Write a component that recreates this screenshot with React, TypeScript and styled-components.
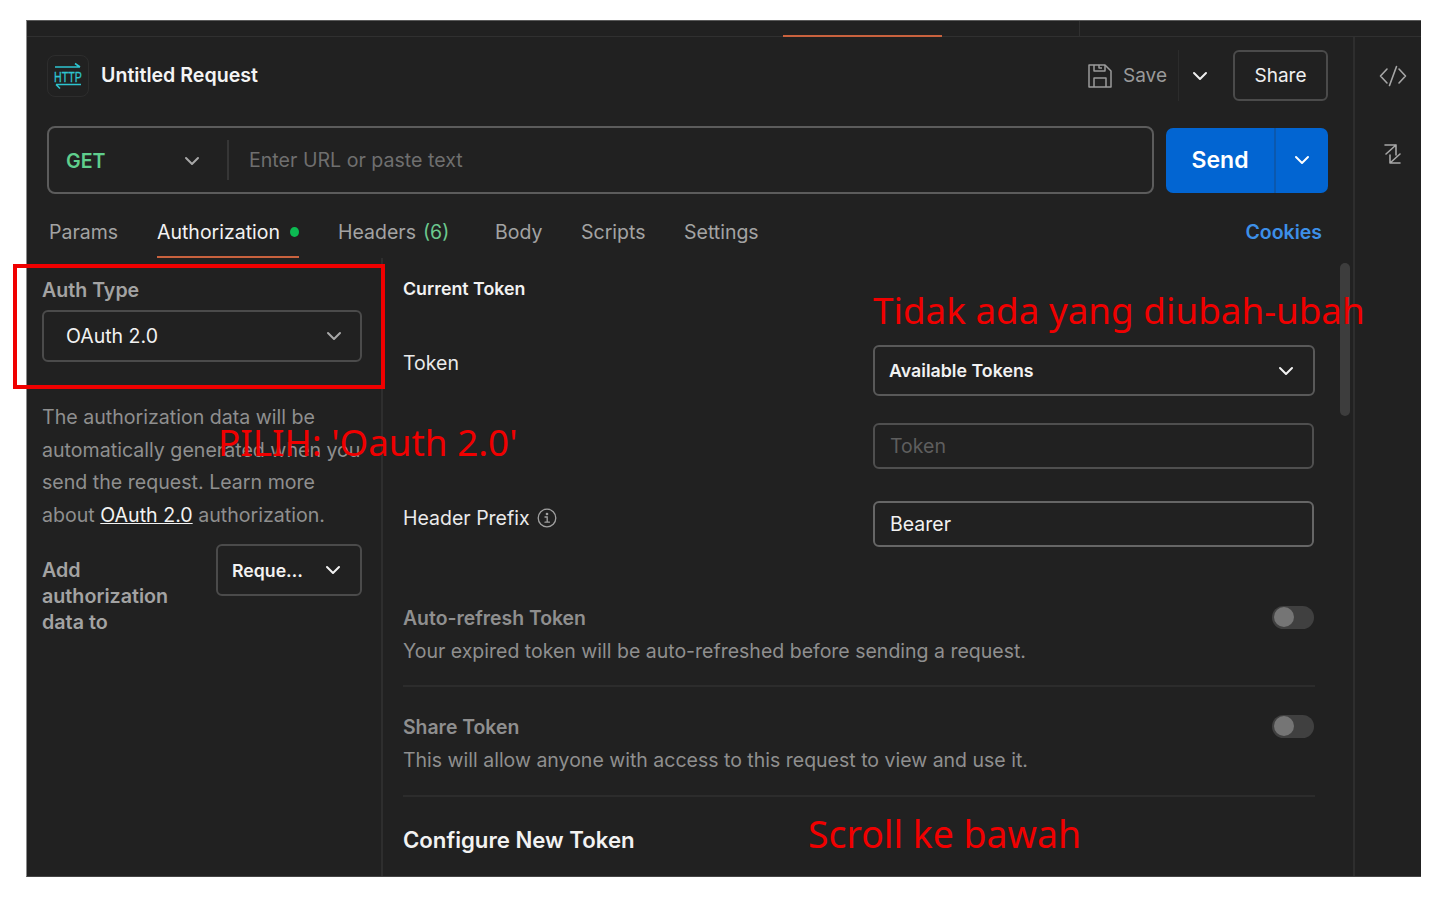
import React from "react";
import styled, { createGlobalStyle } from "styled-components";

const Global = createGlobalStyle`
  html, body { margin: 0; padding: 0; background: #fff; }
  body { font-family: Inter, "Liberation Sans", sans-serif; overflow: hidden; }
  * { box-sizing: border-box; }
`;

const Page = styled.div`
  position: relative;
  width: 1440px;
  height: 903px;
  padding: 20px 19px 26px 26px;
  background: #fff;
  overflow: hidden;
`;
const Win = styled.div`
  width: 1395px;
  height: 857px;
  background: #212121;
  border-top: 1px solid #5a5a5a;
  border-left: 1px solid #8a8a8a;
  border-bottom: 1px solid #444;
  display: flex;
  flex-direction: column;
  overflow: hidden;
  color: #f2f2f2;
`;
const TopStrip = styled.div`
  height: 16px;
  flex: none;
  border-bottom: 1px solid #303030;
  display: flex;
`;
const StripSpacer = styled.div`
  width: 756px;
`;
const StripActive = styled.div`
  width: 159px;
  height: 16px;
  border-bottom: 2px solid #c9623e;
`;
const StripTick = styled.div`
  width: 1px;
  height: 15px;
  margin-left: 137px;
  background: #303030;
`;
const Main = styled.div`
  flex: 1;
  display: flex;
  min-height: 0;
`;
const Work = styled.div`
  position: relative;
  width: 1326px;
  flex: none;
  display: flex;
  flex-direction: column;
  min-height: 0;
`;
const Rail = styled.div`
  flex: 1;
  border-left: 2px solid #2e2e2e;
  display: flex;
  flex-direction: column;
  align-items: center;
  padding: 28px 0 0 10px;
  gap: 56px;
  color: #a6a6a6;
`;
const Header = styled.div`
  height: 89px;
  flex: none;
  padding: 13px 0 0 20px;
  display: flex;
  align-items: flex-start;
`;
const LogoBox = styled.div`
  width: 42px;
  height: 42px;
  margin-top: 5px;
  border: 1px solid #2d2d2d;
  border-radius: 8px;
  display: flex;
  align-items: center;
  justify-content: center;
`;
const Title = styled.div`
  margin: 4px 0 0 12px;
  height: 42px;
  line-height: 42px;
  font-size: 19.6px;
  font-weight: 600;
  color: #f4f4f4;
  flex: 1;
`;
const SaveGroup = styled.div`
  display: flex;
  align-items: center;
  height: 51px;
  color: #9a9a9a;
  font-size: 19px;
  gap: 11px;
`;
const SaveSep = styled.div`
  width: 1px;
  height: 51px;
  background: #2c2c2c;
`;
const SaveChevron = styled.div`
  width: 42px;
  display: flex;
  justify-content: center;
  margin-left: -11px;
  color: #eee;
`;
const ShareButton = styled.div`
  width: 95px;
  height: 51px;
  margin: 0 25px 0 12px;
  border: 2px solid #4b4b4b;
  border-radius: 6px;
  display: flex;
  align-items: center;
  justify-content: center;
  font-size: 19px;
  color: #f0f0f0;
`;
const UrlRow = styled.div`
  height: 68px;
  flex: none;
  margin-left: 20px;
  display: flex;
  gap: 12px;
  align-items: center;
`;
const UrlBox = styled.div`
  width: 1107px;
  height: 68px;
  border: 2px solid #5c5c5c;
  border-radius: 8px;
  display: flex;
  align-items: center;
`;
const Method = styled.div`
  width: 180px;
  height: 40px;
  padding: 1px 27px 0 17px;
  border-right: 2px solid #363636;
  display: flex;
  align-items: center;
  justify-content: space-between;
  color: #5fce8d;
  font-size: 19.6px;
  font-weight: 600;
`;
const MethodChevron = styled.span`
  color: #a8a8a8;
  display: flex;
`;
const UrlPlaceholder = styled.div`
  padding-left: 20px;
  font-size: 19.6px;
  color: #6f6f6f;
`;
const SendGroup = styled.div`
  width: 162px;
  height: 65px;
  display: flex;
  border-radius: 7px;
  background: #0265d2;
  overflow: hidden;
  color: #fff;
`;
const SendLabel = styled.div`
  width: 110px;
  display: flex;
  align-items: center;
  justify-content: center;
  font-size: 23px;
  font-weight: 600;
  border-right: 2px solid #0b58ae;
`;
const SendChevron = styled.div`
  flex: 1;
  display: flex;
  align-items: center;
  justify-content: center;
`;
const Tabs = styled.div`
  height: 64px;
  flex: none;
  padding: 0 31px 0 22px;
  display: flex;
  font-size: 19.5px;
  color: #a3a3a3;
`;
const Tab = styled.div<{ $w: number; $active?: boolean }>`
  width: ${(p) => p.$w}px;
  height: 64px;
  padding-top: ${(p) => (p.$active ? 0 : 12)}px;
  display: flex;
  align-items: center;
  gap: 10px;
  white-space: nowrap;
  color: ${(p) => (p.$active ? "#f2f2f2" : "inherit")};
`;
const ActiveTabInner = styled.div`
  width: 142px;
  height: 64px;
  padding-top: 14px;
  display: flex;
  align-items: center;
  gap: 10px;
  border-bottom: 2px solid #c9623e;
`;
const Dot = styled.span`
  width: 10px;
  height: 10px;
  border-radius: 50%;
  background: #0cbb52;
`;
const Count = styled.span`
  color: #6cc88e;
  margin-left: -3px;
`;
const CookieLink = styled.div`
  margin-left: auto;
  height: 64px;
  padding-top: 12px;
  display: flex;
  align-items: center;
  color: #3d8fe8;
  font-size: 19.5px;
  font-weight: 600;
`;
const Body = styled.div`
  flex: 1;
  min-height: 0;
  display: flex;
  overflow: hidden;
`;
const LeftPane = styled.div`
  width: 356px;
  flex: none;
  border-right: 2px solid #2e2e2e;
  padding: 20px 19px 0 15px;
`;
const AuthLabel = styled.div`
  font-size: 19.6px;
  font-weight: 600;
  line-height: 24px;
  color: #a3a3a3;
`;
const AuthSelect = styled.div`
  height: 52px;
  margin-top: 8px;
  padding: 0 18px 0 22px;
  border: 2px solid #4b4b4b;
  border-radius: 6px;
  display: flex;
  align-items: center;
  justify-content: space-between;
  font-size: 19.5px;
  color: #f2f2f2;
`;
const Desc = styled.div`
  margin-top: 39px;
  font-size: 19.6px;
  line-height: 32.6px;
  color: #8f8f8f;
  white-space: nowrap;
`;
const DescLink = styled.span`
  color: #f2f2f2;
  text-decoration: underline;
`;
const AddRow = styled.div`
  margin-top: 13px;
  display: flex;
  justify-content: space-between;
  align-items: flex-start;
`;
const AddLabel = styled.div`
  margin-top: 13px;
  font-size: 19.7px;
  font-weight: 600;
  line-height: 26px;
  color: #a3a3a3;
`;
const AddSelect = styled.div`
  width: 146px;
  height: 52px;
  padding: 0 19px 0 14px;
  border: 2px solid #4b4b4b;
  border-radius: 6px;
  display: flex;
  align-items: center;
  justify-content: space-between;
  font-size: 17.7px;
  font-weight: 600;
  color: #f2f2f2;
`;
const RightPane = styled.div`
  flex: 1;
  min-width: 0;
  padding: 21px 38px 0 20px;
`;
const SubHead = styled.div`
  height: 20px;
  line-height: 20px;
  font-size: 17.8px;
  font-weight: 600;
  color: #f2f2f2;
`;
const FieldRow = styled.div<{ $h: number; $gap?: number }>`
  height: ${(p) => p.$h}px;
  margin-top: ${(p) => p.$gap ?? 0}px;
  display: flex;
  justify-content: space-between;
  align-items: flex-start;
`;
const FieldLabel = styled.div<{ $top: number }>`
  margin-top: ${(p) => p.$top}px;
  line-height: 26px;
  font-size: 19.5px;
  color: #eaeaea;
  display: flex;
  align-items: center;
  gap: 7px;
`;
const TokenSelect = styled.div`
  width: 442px;
  height: 51px;
  padding: 0 19px 0 14px;
  border: 2px solid #595959;
  border-radius: 6px;
  display: flex;
  align-items: center;
  justify-content: space-between;
  font-size: 17.8px;
  font-weight: 600;
  color: #f2f2f2;
`;
const TextBox = styled.div<{ $strong?: boolean }>`
  width: 441px;
  height: 46px;
  margin-right: 1px;
  padding: 0 15px;
  border: 2px solid ${(p) => (p.$strong ? "#666" : "#4f4f4f")};
  border-radius: 6px;
  display: flex;
  align-items: center;
  font-size: 19.5px;
  color: ${(p) => (p.$strong ? "#f2f2f2" : "#5e5e5e")};
`;
const ToggleBlock = styled.div<{ $h: number; $top: number }>`
  height: ${(p) => p.$h}px;
  padding-top: ${(p) => p.$top}px;
  border-bottom: 2px solid #2c2c2c;
`;
const ToggleHead = styled.div`
  height: 26px;
  display: flex;
  justify-content: space-between;
  align-items: center;
  padding-right: 1px;
`;
const ToggleTitle = styled.div`
  font-size: 19.4px;
  font-weight: 600;
  color: #8f8f8f;
`;
const Toggle = styled.div`
  width: 42px;
  height: 23px;
  margin-top: -2px;
  border-radius: 12px;
  background: #404040;
  padding: 1px 2px;
`;
const Knob = styled.div`
  width: 20px;
  height: 20px;
  border-radius: 50%;
  background: #757575;
`;
const ToggleDesc = styled.div`
  margin-top: 7px;
  line-height: 26px;
  font-size: 19.5px;
  color: #8f8f8f;
  white-space: nowrap;
`;
const ConfigureHead = styled.div`
  margin-top: 28px;
  line-height: 30px;
  font-size: 22.2px;
  font-weight: 600;
  color: #f2f2f2;
`;
const ScrollThumb = styled.div`
  position: absolute;
  left: 1313px;
  top: 226px;
  width: 10px;
  height: 153px;
  border-radius: 5px;
  background: #3d3d3d;
`;
const Annotation = styled.div<{ $x: number; $y: number; $size?: number }>`
  position: absolute;
  left: ${(p) => p.$x}px;
  top: ${(p) => p.$y}px;
  font-family: "Noto Sans", "Open Sans", sans-serif;
  font-size: ${(p) => p.$size ?? 36.8}px;
  line-height: 52px;
  color: #f00000;
  white-space: nowrap;
`;
const RedBox = styled.div`
  position: absolute;
  left: 13px;
  top: 264px;
  width: 372px;
  height: 125px;
  border: 4px solid #f00000;
`;

const Chevron = ({ size = 16, sw = 2 }: { size?: number; sw?: number }) => (
  <svg width={size} height={size} viewBox="0 0 16 16" fill="none" stroke="currentColor" strokeWidth={sw} strokeLinecap="round" strokeLinejoin="round">
    <path d="M2 5l6 6 6-6" />
  </svg>
);

const HttpLogo = () => (
  <svg width="30" height="28" viewBox="0 0 30 28" fill="none" stroke="#2ec4cf" strokeWidth="1.6">
    <path d="M2 5h25M22 1.500L27 5" />
    <text transform="translate(1 19.500) scale(0.76 1)" fontFamily="Liberation Sans, sans-serif" fontSize="14" fill="#2ec4cf" stroke="#2ec4cf" strokeWidth="0.3">HTTP</text>
    <path d="M3 22.500h25M3 22.500l4 4" />
  </svg>
);

const SaveIcon = () => (
  <svg width="24" height="24" viewBox="0 0 24 24" fill="none" stroke="currentColor" strokeWidth="1.500" strokeLinejoin="round">
    <path d="M1 1h16L23 7v16H1z" />
    <path d="M6 1v6h11V1M11 1v3h3" />
    <path d="M6 23v-9h12v9" />
  </svg>
);

const CodeIcon = () => (
  <svg width="28" height="22" viewBox="0 0 28 22" fill="none" stroke="currentColor" strokeWidth="1.600" strokeLinecap="round" strokeLinejoin="round">
    <path d="M8 4L1.500 11l6.500 7M20 4l6.500 7-6.500 7M17.500 1.500L10.500 20.500" />
  </svg>
);

const ExpandIcon = () => (
  <svg width="20" height="22" viewBox="0 0 20 22" fill="none" stroke="currentColor" strokeWidth="1.600" strokeLinecap="round" strokeLinejoin="round">
    <path d="M2 2h11v10M13 2L3 11" />
    <path d="M7 12v8h10M7 20L17 11" />
  </svg>
);

const InfoIcon = () => (
  <svg width="20" height="20" viewBox="0 0 20 20" fill="none" stroke="#a0a0a0" strokeWidth="1.300" strokeLinecap="round">
    <circle cx="10" cy="10" r="8.800" />
    <path d="M8 9h2.200v5M8 14.200h4.400" />
    <circle cx="10" cy="6" r="0.700" fill="#a0a0a0" />
  </svg>
);

export default function App() {
  return (
    <Page>
      <Global />
      <Win>
        <TopStrip>
          <StripSpacer />
          <StripActive />
          <StripTick />
        </TopStrip>
        <Main>
          <Work>
            <Header>
              <LogoBox><HttpLogo /></LogoBox>
              <Title>Untitled Request</Title>
              <SaveGroup>
                <SaveIcon />
                <span>Save</span>
                <SaveSep />
                <SaveChevron><Chevron /></SaveChevron>
              </SaveGroup>
              <ShareButton>Share</ShareButton>
            </Header>
            <UrlRow>
              <UrlBox>
                <Method>GET<MethodChevron><Chevron /></MethodChevron></Method>
                <UrlPlaceholder>Enter URL or paste text</UrlPlaceholder>
              </UrlBox>
              <SendGroup>
                <SendLabel>Send</SendLabel>
                <SendChevron><Chevron /></SendChevron>
              </SendGroup>
            </UrlRow>
            <Tabs>
              <Tab $w={108}>Params</Tab>
              <Tab $w={181} $active><ActiveTabInner>Authorization<Dot /></ActiveTabInner></Tab>
              <Tab $w={157}>Headers <Count>(6)</Count></Tab>
              <Tab $w={86}>Body</Tab>
              <Tab $w={103}>Scripts</Tab>
              <Tab $w={100}>Settings</Tab>
              <CookieLink>Cookies</CookieLink>
            </Tabs>
            <Body>
              <LeftPane>
                <AuthLabel>Auth Type</AuthLabel>
                <AuthSelect>OAuth 2.0<MethodChevron><Chevron /></MethodChevron></AuthSelect>
                <Desc>
                  The authorization data will be<br />
                  automatically generated when you<br />
                  send the request. Learn more<br />
                  about <DescLink>OAuth 2.0</DescLink> authorization.
                </Desc>
                <AddRow>
                  <AddLabel>Add<br />authorization<br />data to</AddLabel>
                  <AddSelect>Reque…<Chevron /></AddSelect>
                </AddRow>
              </LeftPane>
              <RightPane>
                <SubHead>Current Token</SubHead>
                <FieldRow $h={78} $gap={46}>
                  <FieldLabel $top={5}>Token</FieldLabel>
                  <TokenSelect>Available Tokens<Chevron /></TokenSelect>
                </FieldRow>
                <FieldRow $h={78}>
                  <span />
                  <TextBox>Token</TextBox>
                </FieldRow>
                <FieldRow $h={104}>
                  <FieldLabel $top={4}>Header Prefix<InfoIcon /></FieldLabel>
                  <TextBox $strong>Bearer</TextBox>
                </FieldRow>
                <ToggleBlock $h={82} $top={0}>
                  <ToggleHead><ToggleTitle>Auto-refresh Token</ToggleTitle><Toggle><Knob /></Toggle></ToggleHead>
                  <ToggleDesc>Your expired token will be auto-refreshed before sending a request.</ToggleDesc>
                </ToggleBlock>
                <ToggleBlock $h={110} $top={27}>
                  <ToggleHead><ToggleTitle>Share Token</ToggleTitle><Toggle><Knob /></Toggle></ToggleHead>
                  <ToggleDesc>This will allow anyone with access to this request to view and use it.</ToggleDesc>
                </ToggleBlock>
                <ConfigureHead>Configure New Token</ConfigureHead>
              </RightPane>
            </Body>
            <ScrollThumb />
          </Work>
          <Rail>
            <CodeIcon />
            <ExpandIcon />
          </Rail>
        </Main>
      </Win>
      <RedBox />
      <Annotation $x={873} $y={284}>Tidak ada yang diubah-ubah</Annotation>
      <Annotation $x={218} $y={416}>PILIH: 'Oauth 2.0'</Annotation>
      <Annotation $x={808} $y={808} $size={37.4}>Scroll ke bawah</Annotation>
    </Page>
  );
}
